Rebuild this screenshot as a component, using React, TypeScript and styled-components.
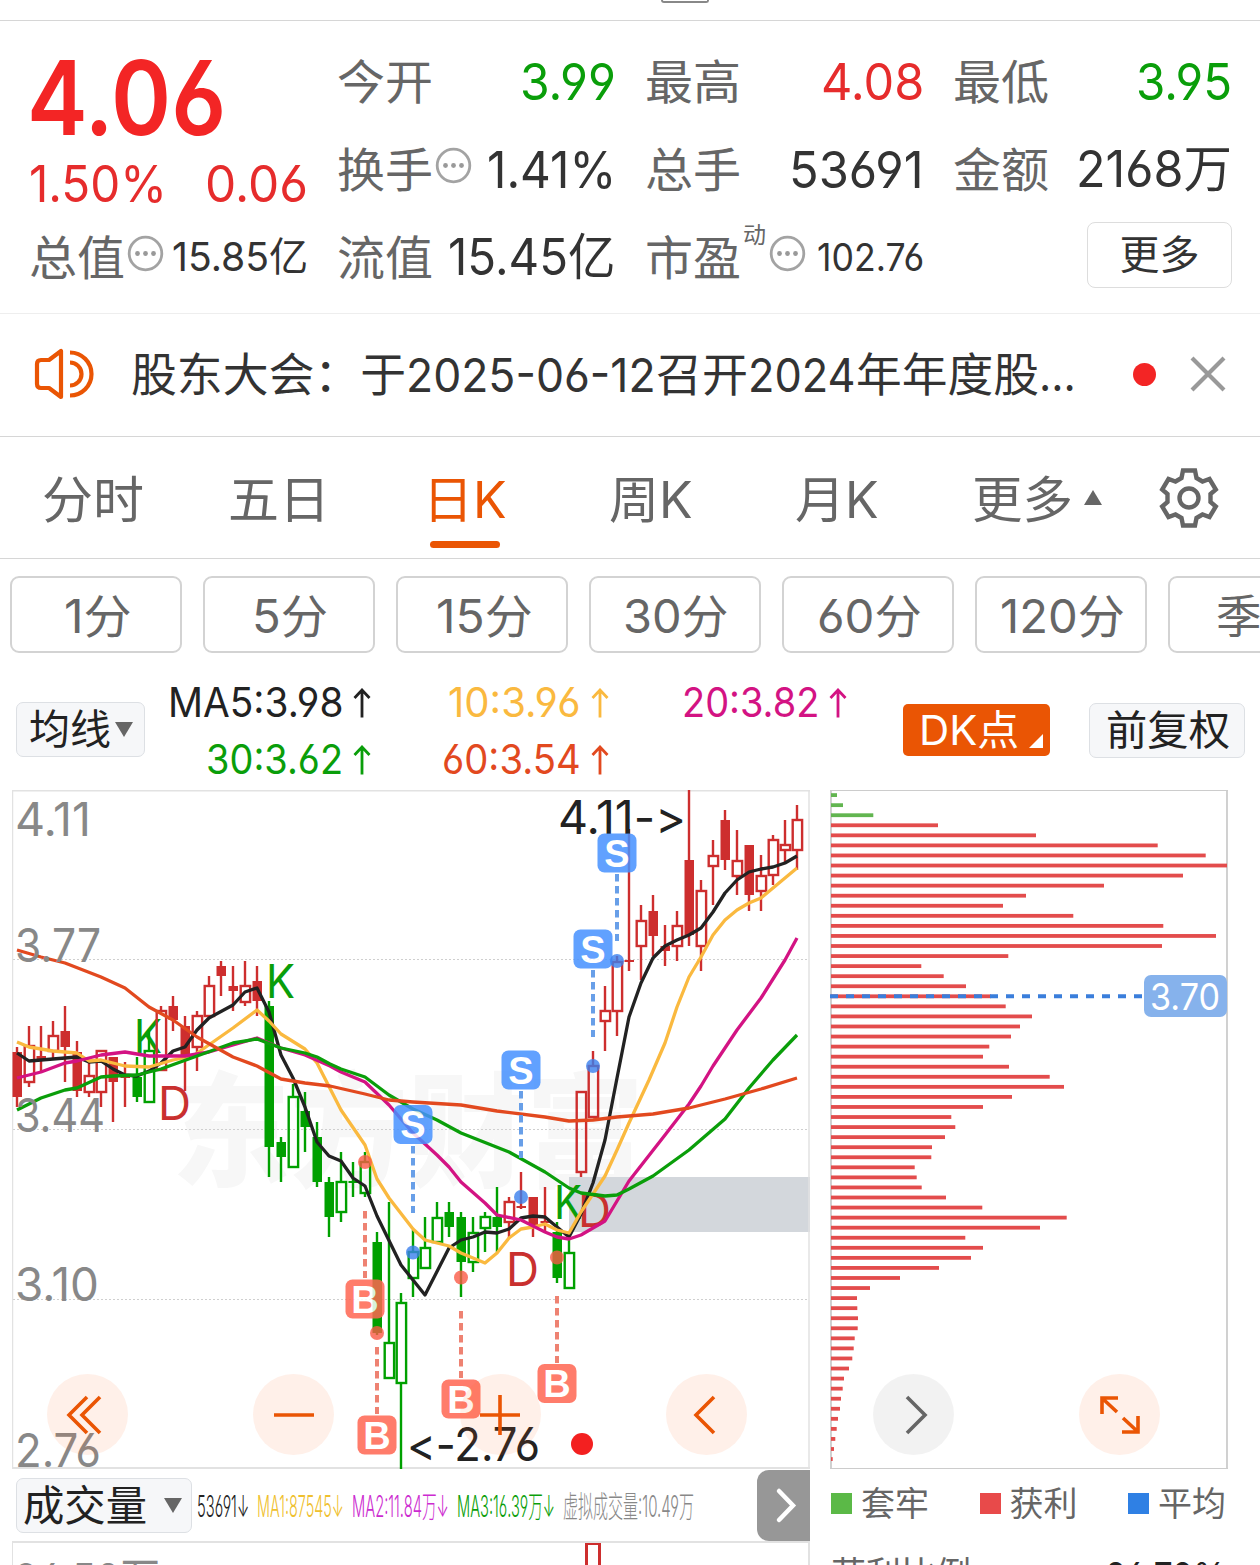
import React, { useLayoutEffect, useRef, useState } from 'react'
import styled, { createGlobalStyle } from 'styled-components'

const FONT = `Inter, 'Noto Sans CJK SC', sans-serif`
const RED = '#e62c2c'
const GREEN = '#0a9e0a'
const ORANGE = '#ea5504'
const UP = '#cd2e2e'
const DOWN = '#00a000'

const GlobalStyle = createGlobalStyle`
  * {
    box-sizing: border-box;
  }
  body {
    margin: 0;
    background: #fff;
    color: #333;
    font-family: ${FONT};
    font-feature-settings: 'cv03', 'cv04';
    overflow: hidden;
  }
  button {
    font: inherit;
    color: inherit;
    padding: 0;
    font-feature-settings: inherit;
  }
`

/* ---------- text squeezed to the width of its slot ---------- */

const FitBox = styled.span<{ $w: number; $size: number; $color?: string }>`
  display: block;
  flex: none;
  width: ${(p) => p.$w}px;
  height: ${(p) => p.$size}px;
  line-height: ${(p) => p.$size}px;
  font-size: ${(p) => p.$size}px;
  color: ${(p) => p.$color || 'inherit'};
`

const FitInner = styled.span`
  display: inline-block;
  white-space: pre;
  transform-origin: 0 50%;
`

interface FitProps {
  w: number
  size: number
  color?: string
  children: string
}

function Fit({ w, size, color, children }: FitProps) {
  const ref = useRef<HTMLSpanElement>(null)
  const [scale, setScale] = useState(1)

  useLayoutEffect(() => {
    if (ref.current) {
      setScale(w / ref.current.offsetWidth)
    }
  }, [w, size, children])

  return (
    <FitBox $w={w} $size={size} $color={color}>
      <FitInner ref={ref} style={{ transform: `scaleX(${scale})` }}>
        {children}
      </FitInner>
    </FitBox>
  )
}

/* ---------- layout ---------- */

const Page = styled.div`
  width: 1260px;
  height: 1565px;
  overflow: hidden;
  display: flex;
  flex-direction: column;
`

const TopStrip = styled.div`
  flex: none;
  height: 21px;
  padding-left: 661px;
  border-bottom: 1px solid #d6d6d6;
`

const Handle = styled.div`
  width: 48px;
  height: 3px;
  border: 2px solid #888;
  border-top: none;
  border-radius: 0 0 8px 8px;
`

const Quote = styled.section`
  flex: none;
  height: 293px;
  padding: 16px 30px 0;
  border-bottom: 1px solid #eee;
  display: grid;
  grid-template-columns: repeat(4, 276px);
  column-gap: 32px;
`

const QuoteColumn = styled.div`
  display: flex;
  flex-direction: column;
`

const QuoteRow = styled.div`
  height: 88px;
  margin: 0 -2px 0 -1px;
  display: flex;
  align-items: center;
  justify-content: space-between;
`

const Price = styled.div`
  height: 108px;
  margin-left: -3px;
  padding-top: 9px;
  font-weight: 600;
  color: #f32525;
`

const Change = styled.div`
  height: 68px;
  margin: 0 -2px 0 -1px;
  padding: 13px 0 0;
  display: flex;
  justify-content: space-between;
`

const LabelGroup = styled.div`
  display: flex;
  align-items: center;
  gap: 2px;
  color: #666;

  svg {
    margin-bottom: 7px;
  }
`

const Sup = styled.span`
  align-self: flex-start;
  font-size: 23px;
  line-height: 23px;
  margin: -10px 1px 0 0;
`

const MoreButton = styled.button`
  width: 145px;
  height: 66px;
  margin: -5px 0 0 auto;
  border: 1px solid #ddd;
  border-radius: 8px;
  background: #fff;
  font-size: 40px;
  line-height: 40px;
`

const Notice = styled.section`
  flex: none;
  height: 123px;
  padding: 0 34px 2px;
  border-bottom: 1px solid #d6d6d6;
  display: flex;
  align-items: center;
`

const NoticeText = styled.div`
  display: flex;
  margin-left: 36px;
  width: 1002px;
`

const Dot = styled.span`
  width: 23px;
  height: 23px;
  margin-right: 34px;
  border-radius: 50%;
  background: #f32525;
`

const Tabs = styled.nav`
  flex: none;
  height: 122px;
  border-bottom: 1px solid #d6d6d6;
  display: flex;
  color: #666;
`

const Tab = styled.div<{ $active?: boolean; $w?: number }>`
  width: ${(p) => p.$w || 186}px;
  padding-top: 38px;
  display: flex;
  flex-direction: column;
  align-items: center;
  color: ${(p) => (p.$active ? ORANGE : '#666')};
`

const Underline = styled.span`
  width: 70px;
  height: 7px;
  margin-top: 16px;
  border-radius: 4px;
  background: ${ORANGE};
`

const TabMore = styled.div`
  display: flex;
  align-items: center;
  gap: 11px;

  svg {
    margin-bottom: 6px;
  }
`

const GearSlot = styled.div`
  padding: 30px 0 0 14px;
`

const Periods = styled.div`
  flex: none;
  display: flex;
  gap: 21px;
  padding: 17px 0 0 10px;
  height: 118px;
`

const Period = styled.button`
  flex: none;
  width: 172px;
  height: 77px;
  padding-top: 3px;
  border: 2px solid #d3d3d3;
  border-radius: 9px;
  background: #fff;
  color: #666;
  display: flex;
  align-items: center;
  justify-content: center;
`

const Indicators = styled.div`
  flex: none;
  height: 113px;
  padding: 5px 15px 0 16px;
  display: flex;
`

const SelectButton = styled.button<{ $w: number; $pad?: number; $gap?: number }>`
  flex: none;
  width: ${(p) => p.$w}px;
  height: 55px;
  border: 1px solid #dde0e4;
  border-radius: 7px;
  background: #f6f7f9;
  color: #222;
  display: flex;
  align-items: center;
  gap: ${(p) => p.$gap ?? 4}px;
  padding-left: ${(p) => p.$pad ?? 12}px;
`

const MaGrid = styled.div`
  flex: none;
  width: 758px;
  display: grid;
  grid-template-columns: 226px 238px 238px;
  grid-template-rows: 57px 57px;
  margin-top: -8px;
`

const MaItem = styled.div<{ $color: string }>`
  display: flex;
  justify-content: flex-end;
  align-items: center;
  gap: 10px;
  color: ${(p) => p.$color};
`

const DkButton = styled.button`
  flex: none;
  width: 147px;
  height: 52px;
  margin: 22px 39px 0 0;
  border: none;
  border-radius: 5px;
  background: ${ORANGE};
  color: #fff;
  display: flex;
  padding: 6px 7px 0 15px;
  justify-content: space-between;
`

const Row = styled.div<{ $top: number }>`
  display: flex;
  padding-top: ${(p) => p.$top}px;
`

const Charts = styled.div`
  flex: none;
  display: flex;
  gap: 20px;
  padding-left: 12px;
  height: 680px;
`

const Panel = styled.div`
  position: relative;
  height: 680px;
`

// calt would turn "->" into a single arrow glyph
const ChartSvg = styled.svg`
  display: block;
  font-feature-settings: 'cv03', 'cv04', 'calt' 0;
`

const Controls = styled.div<{ $left: number }>`
  position: absolute;
  top: 584px;
  left: ${(p) => p.$left}px;
  display: flex;
  gap: 125.4px;
`

const RoundButton = styled.button<{ $gray?: boolean }>`
  width: 81px;
  height: 81px;
  border: none;
  border-radius: 50%;
  background: ${(p) => (p.$gray ? 'rgba(0,0,0,.05)' : 'rgba(255,110,40,.1)')};
  display: flex;
  align-items: center;
  justify-content: center;
`

const Bottom = styled.div`
  flex: none;
  display: flex;
  height: 95px;
  padding-left: 12px;
  gap: 21px;
`

const VolumeColumn = styled.div`
  width: 798px;
`

const VolumeBar = styled.div`
  height: 71px;
  display: flex;
  align-items: center;
  padding-left: 4px;
`

const VolumeValues = styled.div`
  flex: 1;
  display: flex;
  gap: 8px;
  padding-left: 5px;
  font-weight: 300;
`

const Expand = styled.button`
  width: 53px;
  height: 71px;
  border: none;
  border-radius: 12px 0 0 12px;
  background: #979797;
`

const VolumeChart = styled.div`
  height: 24px;
  border: 2px solid #e2e2e2;
  border-width: 2px 2px 0 1px;
  overflow: hidden;
  display: flex;
  color: #888;
  padding-left: 1px;
`

const VolumeLabel = styled.div`
  width: 571px;
  padding-top: 14px;
`

const VolumeBarShape = styled.div`
  width: 16px;
  height: 40px;
  border: 3px solid ${UP};
  margin-top: -1px;
`

const SideColumn = styled.div`
  width: 395px;
  color: #666;
`

const Legend = styled.div`
  height: 67px;
  display: flex;
  align-items: center;
  justify-content: space-between;
`

const LegendItem = styled.div`
  display: flex;
  align-items: center;
  gap: 9px;
`

const Swatch = styled.span<{ $color: string }>`
  width: 21px;
  height: 21px;
  background: ${(p) => p.$color};
`

const StatRow = styled.div`
  display: flex;
  justify-content: space-between;
  padding-top: 20px;
`

/* ---------- icons ---------- */

const InfoIcon = () => (
  <svg width="37" height="37" viewBox="0 0 37 37">
    <circle cx="18.5" cy="18.5" r="16.3" fill="none" stroke="#a3a3a3" strokeWidth="2.8" />
    <circle cx="10.5" cy="18.5" r="2.4" fill="#999" />
    <circle cx="18.5" cy="18.5" r="2.4" fill="#999" />
    <circle cx="26.5" cy="18.5" r="2.4" fill="#999" />
  </svg>
)

const SpeakerIcon = () => (
  <svg width="61" height="54" viewBox="0 0 61 54" fill="none" stroke={ORANGE} strokeWidth="4.2">
    <path d="M27 4V50L15 41H7Q3 41 3 37V17Q3 13 7 13H15Z" strokeLinejoin="round" />
    <path d="M36 15.500A11.500 11.500 0 0 1 36 38.500" />
    <path d="M36 5.500A21.500 21.500 0 0 1 36 48.500" />
  </svg>
)

const CloseIcon = () => (
  <svg width="36" height="36" viewBox="0 0 36 36" stroke="#999" strokeWidth="4.2">
    <path d="M2 2L34 34M34 2L2 34" />
  </svg>
)

const GearIcon = () => (
  <svg width="62" height="62" viewBox="-31 -31 62 62" fill="none" stroke="#666" strokeWidth="4.4">
    <path d="M-6 -27.500H6L7.500 -20L13.500 -16.500L20.500 -19L26.800 -8.500L21.500 -4V4L26.800 8.500L20.500 19L13.500 16.500L7.500 20L6 27.500H-6L-7.500 20L-13.500 16.500L-20.500 19L-26.800 8.500L-21.500 4V-4L-26.800 -8.500L-20.500 -19L-13.500 -16.500L-7.500 -20Z" />
    <circle r="9.500" />
  </svg>
)

const ArrowUp = () => (
  <svg width="18" height="30" viewBox="0 0 18 30" fill="none" stroke="currentColor" strokeWidth="2.8">
    <path d="M9 2V29.500M1.500 10L9 2L16.500 10" />
  </svg>
)

interface TriangleProps {
  up?: boolean
}

const Triangle = ({ up }: TriangleProps) => (
  <svg width="18" height="15" viewBox="0 0 18 15" fill="#666">
    <path d={up ? 'M9 0L18 15H0Z' : 'M0 0H18L9 15Z'} />
  </svg>
)

interface ControlIconProps {
  d: string
  color?: string
}

const ControlIcon = ({ d, color = ORANGE }: ControlIconProps) => (
  <svg width="44" height="44" viewBox="0 0 44 44" fill="none" stroke={color} strokeWidth="3.6">
    <path d={d} />
  </svg>
)

/* ---------- candle chart ---------- */

type Kind = 'R' | 'r' | 'G' | 'g' // capital: solid body, small: hollow body
type Candle = [Kind, number, number, number, number] // kind, high, body top, body bottom, low

const candles: Candle[] = [
  ['R', 1047, 1052, 1097, 1107],
  ['r', 1026, 1045, 1083, 1087],
  ['R', 1026, 1056, 1060, 1071],
  ['r', 1021, 1035, 1052, 1058],
  ['R', 1006, 1031, 1047, 1082],
  ['R', 1041, 1052, 1091, 1097],
  ['r', 1063, 1075, 1093, 1097],
  ['r', 1050, 1050, 1093, 1107],
  ['R', 1057, 1057, 1082, 1122],
  ['R', 1062, 1075, 1078, 1107],
  ['G', 1057, 1077, 1097, 1102],
  ['g', 1030, 1050, 1103, 1103],
  ['r', 1006, 1010, 1071, 1071],
  ['R', 996, 1006, 1020, 1031],
  ['R', 1016, 1026, 1057, 1091],
  ['r', 1011, 1015, 1048, 1071],
  ['r', 976, 985, 1017, 1017],
  ['R', 961, 966, 976, 996],
  ['R', 966, 986, 991, 1011],
  ['r', 961, 985, 1003, 1006],
  ['R', 966, 981, 1001, 1016],
  ['G', 1001, 1006, 1147, 1177],
  ['G', 1137, 1142, 1157, 1182],
  ['g', 1084, 1096, 1168, 1168],
  ['G', 1092, 1111, 1127, 1152],
  ['G', 1122, 1137, 1182, 1187],
  ['G', 1177, 1182, 1217, 1237],
  ['g', 1152, 1181, 1213, 1222],
  ['G', 1162, 1181, 1183, 1197],
  ['g', 1152, 1161, 1194, 1197],
  ['G', 1232, 1242, 1333, 1335],
  ['g', 1202, 1342, 1379, 1379],
  ['g', 1293, 1302, 1384, 1469],
  ['g', 1230, 1251, 1279, 1297],
  ['g', 1217, 1247, 1269, 1269],
  ['g', 1202, 1217, 1243, 1243],
  ['G', 1202, 1212, 1227, 1237],
  ['G', 1212, 1217, 1262, 1297],
  ['g', 1217, 1232, 1263, 1272],
  ['g', 1212, 1216, 1229, 1252],
  ['G', 1187, 1217, 1227, 1252],
  ['r', 1197, 1201, 1223, 1238],
  ['R', 1172, 1206, 1208, 1209],
  ['R', 1197, 1197, 1225, 1237],
  ['R', 1187, 1221, 1223, 1232],
  ['G', 1222, 1232, 1278, 1283],
  ['g', 1238, 1252, 1289, 1289],
  ['r', 1091, 1091, 1173, 1177],
  ['r', 1051, 1065, 1118, 1118],
  ['r', 986, 1010, 1022, 1051],
  ['r', 956, 961, 1012, 1036],
  ['R', 829, 960, 962, 971],
  ['r', 905, 920, 947, 980],
  ['R', 895, 911, 936, 956],
  ['R', 925, 946, 951, 966],
  ['r', 911, 925, 947, 961],
  ['R', 790, 860, 935, 946],
  ['r', 880, 890, 947, 971],
  ['r', 840, 855, 867, 905],
  ['R', 810, 820, 860, 870],
  ['r', 830, 860, 877, 895],
  ['R', 845, 845, 895, 911],
  ['r', 855, 875, 892, 911],
  ['r', 835, 839, 876, 885],
  ['r', 820, 844, 851, 862],
  ['r', 805, 819, 851, 870],
]

const averages = [
  {
    color: '#222',
    points:
      '17,1053 29,1061 53,1059 77,1057 89,1062 101,1061 113,1069 125,1075 137,1076 149,1071 161,1063 173,1051 185,1047 197,1030 209,1018 233,1005 245,992 257,988 269,1012 281,1055 293,1078 305,1107 317,1142 329,1156 341,1161 353,1178 365,1186 377,1216 401,1265 425,1295 449,1248 461,1240 473,1237 485,1232 497,1233 509,1229 521,1218 533,1216 545,1217 557,1227 569,1237 581,1214 593,1183 605,1140 617,1078 629,1017 641,983 653,958 665,946 677,940 689,935 701,928 713,912 725,893 737,880 749,872 761,869 773,867 785,863 797,856',
  },
  {
    color: '#fab93f',
    points:
      '17,1042 29,1047 53,1051 77,1053 89,1061 101,1060 125,1066 149,1067 173,1060 193,1056 213,1042 233,1028 257,1010 269,1021 281,1034 305,1049 317,1063 341,1110 365,1145 377,1179 389,1198 413,1229 425,1240 437,1243 449,1246 461,1253 473,1258 485,1263 497,1253 509,1238 521,1229 533,1227 545,1224 557,1230 569,1233 581,1212 605,1176 617,1150 629,1123 649,1080 665,1043 677,1007 689,977 701,957 713,935 725,920 737,910 749,903 761,898 773,888 785,878 797,868',
  },
  {
    color: '#d31383',
    points:
      '17,1078 41,1072 65,1063 77,1061 101,1055 125,1052 149,1056 185,1056 209,1052 233,1045 257,1038 281,1048 305,1055 330,1066 341,1072 365,1082 389,1105 413,1133 437,1155 449,1167 461,1182 485,1203 497,1215 521,1220 545,1232 557,1237 569,1239 581,1235 605,1221 629,1181 665,1135 689,1104 701,1086 713,1066 737,1030 761,998 785,960 797,938',
  },
  {
    color: GREEN,
    points:
      '17,1110 41,1098 65,1090 77,1088 101,1077 113,1076 137,1075 161,1069 197,1056 233,1043 257,1039 281,1048 305,1053 317,1057 330,1064 341,1069 365,1077 389,1095 413,1109 437,1120 461,1133 509,1152 545,1172 569,1188 581,1193 605,1196 617,1195 629,1189 653,1176 689,1150 725,1119 749,1088 773,1060 797,1035',
  },
  {
    color: '#e2491f',
    points:
      '17,950 41,957 65,963 101,977 125,988 149,1007 173,1020 197,1037 233,1057 257,1066 281,1079 305,1083 330,1086 365,1094 389,1100 413,1102 461,1105 497,1111 545,1117 569,1121 593,1120 617,1117 653,1114 689,1108 725,1099 761,1089 797,1078',
  },
]

// letter, x, badge centre y, dashed line from, to, dot y
type Mark = ['S' | 'B', number, number, number, number, number]

const marks: Mark[] = [
  ['S', 413, 1124.500, 1146, 1213, 1252.500],
  ['S', 521, 1070, 1091, 1158, 1197],
  ['S', 593, 949, 970, 1037, 1066],
  ['S', 617, 853, 874, 941, 961],
  ['B', 365, 1299, 1211, 1278, 1162],
  ['B', 377, 1435, 1347, 1414, 1333],
  ['B', 461, 1399, 1311, 1378, 1277.500],
  ['B', 557, 1383.500, 1296, 1363, 1257.500],
]

interface LabelProps {
  x: number
  y: number
  w: number
  color: string
  size?: number
  children: string
}

const Label = ({ x, y, w, color, size = 46, children }: LabelProps) => (
  <text
    x={x}
    y={y}
    fontSize={size}
    fill={color}
    textLength={w}
    lengthAdjust="spacingAndGlyphs"
  >
    {children}
  </text>
)

function CandleShape({ candle, x }: { candle: Candle; x: number }) {
  const [kind, high, top, bottom, low] = candle
  const color = kind.toLowerCase() === 'r' ? UP : DOWN
  const hollow = kind === 'r' || kind === 'g'

  return (
    <g stroke={color} strokeWidth="2.4" fill="none">
      {high < top && <path d={`M${x} ${high}V${top}`} />}
      {low > bottom && <path d={`M${x} ${bottom}V${low}`} />}
      {hollow ? (
        <rect x={x - 4.300} y={top + 1} width="9.400" height={bottom - top - 2} />
      ) : (
        <rect x={x - 4.500} y={top} width="9.500" height={bottom - top} fill={color} stroke="none" />
      )}
    </g>
  )
}

function MarkShape({ mark }: { mark: Mark }) {
  const [letter, x, y, from, to, dotY] = mark
  const color = letter === 'S' ? '#4691ff' : '#ff6652'
  const line = letter === 'S' ? '#689fe8' : '#ee8272'

  return (
    <g>
      <path d={`M${x} ${from}V${to}`} stroke={line} strokeWidth="4" strokeDasharray="7.500 4.500" />
      <circle cx={x} cy={dotY} r="7" fill={letter === 'S' ? '#3a80ee' : '#fa5a46'} opacity=".8" />
      <g opacity=".85">
        <rect x={x - 19.500} y={y - 19.500} width="39" height="39" rx="7" fill={color} />
        <text
          x={x}
          y={y + 13.500}
          fontSize="38"
          fontWeight="600"
          textAnchor="middle"
          fill="#fff"
          fontFamily="'Liberation Sans', sans-serif"
        >
          {letter}
        </text>
      </g>
    </g>
  )
}

function KChart() {
  return (
    <ChartSvg width="798" height="680" viewBox="12 790 798 680">
      <text
        x="172"
        y="1177"
        fontSize="124"
        fontWeight="900"
        fill="#f7f7f7"
        textLength="472"
        lengthAdjust="spacingAndGlyphs"
      >
        东方财富
      </text>
      <g stroke="#cfcfcf" strokeWidth="1" strokeDasharray="2 2">
        <path d="M13 959.500H809M13 1129.500H809M13 1299.500H809" />
      </g>
      <rect x="569" y="1177" width="241" height="55" fill="#d3d7dc" />
      <path d="M12.500 790V1469M809 790V1469" stroke="#e2e2e2" strokeWidth="1.500" />
      <path d="M12 790.500H810M12 1468H810" stroke="#e2e2e2" strokeWidth="2" />
      <Label x={134} y={1053} w={28} color={GREEN}>K</Label>
      <Label x={266} y={998} w={29} color={GREEN}>K</Label>
      <Label x={554} y={1219} w={28} color={GREEN}>K</Label>
      <Label x={158} y={1120} w={33} color="#c9302f">D</Label>
      <Label x={506} y={1286} w={33} color="#c9302f">D</Label>
      <Label x={578} y={1227} w={33} color="#c9302f">D</Label>
      {candles.map((candle, i) => (
        <CandleShape key={i} candle={candle} x={17 + i * 12} />
      ))}
      {averages.map((line) => (
        <polyline
          key={line.color}
          points={line.points}
          fill="none"
          stroke={line.color}
          strokeWidth="3.300"
          strokeLinejoin="round"
        />
      ))}
      <Label x={15} y={836} w={76} color="#888">4.11</Label>
      <Label x={15} y={962} w={86} color="#888">3.77</Label>
      <Label x={15} y={1132} w={90} color="#888">3.44</Label>
      <Label x={15} y={1301} w={84} color="#888">3.10</Label>
      <Label x={15} y={1467} w={86} color="#888">2.76</Label>
      <Label x={558} y={834} w={128} color="#222">4.11-&gt;</Label>
      <Label x={407} y={1461} w={133} color="#222">&lt;-2.76</Label>
      {marks.map((mark, i) => (
        <MarkShape key={i} mark={mark} />
      ))}
      <circle cx="582" cy="1444" r="11" fill="#f32020" />
    </ChartSvg>
  )
}

/* ---------- chip distribution ---------- */

const chips = [
  6, 12, 42.300, 107, 205, 326.700, 374.700, 396, 352, 273, 195, 172, 242.300, 332.300, 385, 331, 177.300,
  90.300, 112.700, 135, 160, 174.700, 201, 189, 180, 158.300, 152, 178, 218.700, 233, 181, 152, 120.300,
  124.300, 114, 101, 100.300, 83.700, 85.700, 90.700, 115, 151.300, 235.700, 209, 134.300, 152, 140, 108,
  69, 39, 26, 26.300, 27, 26.700, 23.700, 22.700, 21.300, 18, 13, 11.700, 10, 9, 7, 5.700, 4.300, 3, 1.700,
]

function ChipChart() {
  return (
    <ChartSvg width="398" height="680" viewBox="830 790 398 680">
      <path d="M831 790V1469M1227 790V1469" stroke="#ccc" strokeWidth="1.800" />
      <path d="M830 790.500H1228M830 1468.500H1228" stroke="#ccc" strokeWidth="1" />
      {chips.map((w, i) => (
        <rect
          key={i}
          x="831"
          y={793.200 + i * 10.060}
          width={w}
          height="3.800"
          fill={i < 3 ? '#62b550' : '#e34c4c'}
        />
      ))}
      <path d="M830 996.200H1144" stroke="#3a7edb" strokeWidth="4" strokeDasharray="8 8" />
      <rect x="1144" y="975" width="83" height="42" rx="7" fill="#86b2ec" />
      <Label x={1150} y={1010} w={70} size={37} color="#fff">3.70</Label>
    </ChartSvg>
  )
}

/* ---------- page ---------- */

const periods: [string, number][] = [
  ['1分', 68],
  ['5分', 76],
  ['15分', 97],
  ['30分', 105],
  ['60分', 105],
  ['120分', 125],
]

function QuoteHeader() {
  return (
    <Quote>
      <QuoteColumn>
        <Price>
          <Fit w={199} size={103}>4.06</Fit>
        </Price>
        <Change>
          <Fit w={138} size={51} color={RED}>1.50%</Fit>
          <Fit w={103} size={51} color={RED}>0.06</Fit>
        </Change>
        <QuoteRow>
          <LabelGroup>
            <Fit w={96} size={47}>总值</Fit>
            <InfoIcon />
          </LabelGroup>
          <Fit w={136} size={40}>15.85亿</Fit>
        </QuoteRow>
      </QuoteColumn>
      <QuoteColumn>
        <QuoteRow>
          <LabelGroup>
            <Fit w={96} size={47}>今开</Fit>
          </LabelGroup>
          <Fit w={96} size={51} color={GREEN}>3.99</Fit>
        </QuoteRow>
        <QuoteRow>
          <LabelGroup>
            <Fit w={96} size={47}>换手</Fit>
            <InfoIcon />
          </LabelGroup>
          <Fit w={129} size={51}>1.41%</Fit>
        </QuoteRow>
        <QuoteRow>
          <LabelGroup>
            <Fit w={96} size={47}>流值</Fit>
          </LabelGroup>
          <Fit w={168} size={50}>15.45亿</Fit>
        </QuoteRow>
      </QuoteColumn>
      <QuoteColumn>
        <QuoteRow>
          <LabelGroup>
            <Fit w={96} size={47}>最高</Fit>
          </LabelGroup>
          <Fit w={103} size={51} color={RED}>4.08</Fit>
        </QuoteRow>
        <QuoteRow>
          <LabelGroup>
            <Fit w={96} size={47}>总手</Fit>
          </LabelGroup>
          <Fit w={135} size={51}>53691</Fit>
        </QuoteRow>
        <QuoteRow>
          <LabelGroup>
            <Fit w={96} size={47}>市盈</Fit>
            <Sup>动</Sup>
            <InfoIcon />
          </LabelGroup>
          <Fit w={107} size={38}>102.76</Fit>
        </QuoteRow>
      </QuoteColumn>
      <QuoteColumn>
        <QuoteRow>
          <LabelGroup>
            <Fit w={96} size={47}>最低</Fit>
          </LabelGroup>
          <Fit w={96} size={51} color={GREEN}>3.95</Fit>
        </QuoteRow>
        <QuoteRow>
          <LabelGroup>
            <Fit w={96} size={47}>金额</Fit>
          </LabelGroup>
          <Fit w={156} size={50}>2168万</Fit>
        </QuoteRow>
        <QuoteRow>
          <MoreButton>更多</MoreButton>
        </QuoteRow>
      </QuoteColumn>
    </Quote>
  )
}

function App() {
  return (
    <Page>
      <GlobalStyle />
      <TopStrip>
        <Handle />
      </TopStrip>
      <QuoteHeader />
      <Notice>
        <SpeakerIcon />
        <NoticeText>
          <Fit w={275} size={46}>股东大会：于</Fit>
          <Fit w={250} size={47}>2025-06-12</Fit>
          <Fit w={92} size={46}>召开</Fit>
          <Fit w={108} size={47}>2024</Fit>
          <Fit w={183} size={46}>年年度股</Fit>
          <Fit w={37} size={46}>...</Fit>
        </NoticeText>
        <Dot />
        <CloseIcon />
      </Notice>
      <Tabs>
        <Tab>
          <Fit w={102} size={50}>分时</Fit>
        </Tab>
        <Tab>
          <Fit w={102} size={50}>五日</Fit>
        </Tab>
        <Tab $active>
          <Fit w={84} size={50}>日K</Fit>
          <Underline />
        </Tab>
        <Tab>
          <Fit w={84} size={50}>周K</Fit>
        </Tab>
        <Tab>
          <Fit w={84} size={50}>月K</Fit>
        </Tab>
        <Tab $w={214}>
          <TabMore>
            <Fit w={101} size={50}>更多</Fit>
            <Triangle up />
          </TabMore>
        </Tab>
        <GearSlot>
          <GearIcon />
        </GearSlot>
      </Tabs>
      <Periods>
        {periods.map(([label, w]) => (
          <Period key={label}>
            <Fit w={w} size={46}>{label}</Fit>
          </Period>
        ))}
        <Period>
          <Fit w={76} size={46}>季K</Fit>
        </Period>
      </Periods>
      <Indicators>
        <Row $top={20}>
          <SelectButton $w={129}>
            <Fit w={82} size={41}>均线</Fit>
            <Triangle />
          </SelectButton>
        </Row>
        <MaGrid>
          <MaItem $color="#222">
            <Fit w={175} size={41}>MA5:3.98</Fit>
            <ArrowUp />
          </MaItem>
          <MaItem $color="#fab93f">
            <Fit w={133} size={41}>10:3.96</Fit>
            <ArrowUp />
          </MaItem>
          <MaItem $color="#d31383">
            <Fit w={137} size={41}>20:3.82</Fit>
            <ArrowUp />
          </MaItem>
          <MaItem $color={GREEN}>
            <Fit w={137} size={41}>30:3.62</Fit>
            <ArrowUp />
          </MaItem>
          <MaItem $color="#e2491f">
            <Fit w={139} size={41}>60:3.54</Fit>
            <ArrowUp />
          </MaItem>
        </MaGrid>
        <DkButton>
          <Fit w={100} size={41}>DK点</Fit>
          <svg width="14" height="43" viewBox="0 0 14 43" fill="#fff">
            <path d="M14 24V38H0Z" />
          </svg>
        </DkButton>
        <Row $top={21}>
          <SelectButton $w={156} $pad={15}>
            <Fit w={124} size={41}>前复权</Fit>
          </SelectButton>
        </Row>
      </Indicators>
      <Charts>
        <Panel>
          <KChart />
          <Controls $left={35}>
            <RoundButton>
              <ControlIcon d="M21 4L3 22L21 40M34 4L16 22L34 40" />
            </RoundButton>
            <RoundButton>
              <ControlIcon d="M2 22H42" />
            </RoundButton>
            <RoundButton>
              <ControlIcon d="M2 22H42M22 2V42" />
            </RoundButton>
            <RoundButton>
              <ControlIcon d="M29 4L11 22L29 40" />
            </RoundButton>
          </Controls>
        </Panel>
        <Panel>
          <ChipChart />
          <Controls $left={43}>
            <RoundButton $gray>
              <ControlIcon d="M15 4L33 22L15 40" color="#666" />
            </RoundButton>
            <RoundButton>
              <ControlIcon d="M4 21V5H20M5 6L19 19M40 23V39H24M39 38L25 25" />
            </RoundButton>
          </Controls>
        </Panel>
      </Charts>
      <Bottom>
        <VolumeColumn>
          <VolumeBar>
            <SelectButton $w={176} $pad={6} $gap={17}>
              <Fit w={124} size={42}>成交量</Fit>
              <Triangle />
            </SelectButton>
            <VolumeValues>
              <Fit w={52} size={30} color="#222">53691↓</Fit>
              <Fit w={87} size={30} color="#efc02e">MA1:87545↓</Fit>
              <Fit w={97} size={30} color="#cc2bd0">MA2:11.84万↓</Fit>
              <Fit w={98} size={30} color={GREEN}>MA3:16.39万↓</Fit>
              <Fit w={131} size={30} color="#888">虚拟成交量:10.49万</Fit>
            </VolumeValues>
            <Expand>
              <svg width="53" height="71" viewBox="0 0 53 71" fill="none" stroke="#fff" strokeWidth="4.500">
                <path d="M22 21L36 35.500L22 50" strokeLinecap="round" />
              </svg>
            </Expand>
          </VolumeBar>
          <VolumeChart>
            <VolumeLabel>
              <Fit w={146} size={44}>26.50万</Fit>
            </VolumeLabel>
            <VolumeBarShape />
          </VolumeChart>
        </VolumeColumn>
        <SideColumn>
          <Legend>
            <LegendItem>
              <Swatch $color="#5bb947" />
              <Fit w={68} size={34}>套牢</Fit>
            </LegendItem>
            <LegendItem>
              <Swatch $color="#e84a4a" />
              <Fit w={68} size={34}>获利</Fit>
            </LegendItem>
            <LegendItem>
              <Swatch $color="#2f80e4" />
              <Fit w={68} size={34}>平均</Fit>
            </LegendItem>
          </Legend>
          <StatRow>
            <Fit w={140} size={35}>获利比例</Fit>
            <Fit w={120} size={36} color="#222">96.70%</Fit>
          </StatRow>
        </SideColumn>
      </Bottom>
    </Page>
  )
}

export default App
